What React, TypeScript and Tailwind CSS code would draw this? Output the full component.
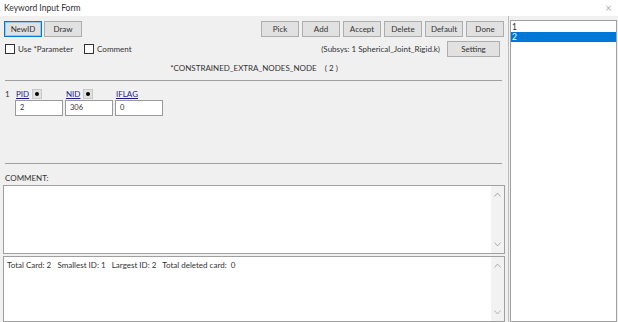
import React from 'react'

const buttons = ['Pick', 'Add', 'Accept', 'Delete', 'Default', 'Done']

function Btn({ label, focused = false, className = '' }: { label: string; focused?: boolean; className?: string }) {
  return (
    <div
      className={`h-[16px] flex items-center justify-center bg-[#e1e1e1] border text-[8px] text-[#333] ${
        focused ? 'border-[#0078d7] shadow-[inset_0_0_0_1px_#9cc5ea]' : 'border-[#adadad]'
      } ${className}`}
    >
      {label}
    </div>
  )
}

function Chevron({ up }: { up: boolean }) {
  return (
    <svg width="7" height="5" viewBox="0 0 7 5" className="block">
      <path d={up ? 'M0.5 4.5 L3.5 1 L6.5 4.5' : 'M0.5 0.5 L3.5 4 L6.5 0.5'} fill="none" stroke="#b0b0b0" strokeWidth="1" />
    </svg>
  )
}

function ScrollBox({ children, className = '' }: { children?: React.ReactNode; className?: string }) {
  return (
    <div className={`mx-[3px] flex bg-white border border-[#a0a0a0] ${className}`}>
      <div className="flex-1 px-[3px] pt-[2px]">{children}</div>
      <div className="w-[13px] bg-[#f2f2f2] flex flex-col items-center justify-between py-[6px]">
        <Chevron up />
        <Chevron up={false} />
      </div>
    </div>
  )
}

function DotBtn() {
  return (
    <div className="w-[10px] h-[10px] bg-[#e1e1e1] border border-[#c8c8c8] flex items-center justify-center">
      <div className="w-[4px] h-[4px] rounded-full bg-black" />
    </div>
  )
}

function Field({ label, value, dot }: { label: string; value: string; dot: boolean }) {
  return (
    <div className="flex flex-col w-[48px]">
      <div className="h-[11px] flex items-center gap-[3px] pl-[1px]">
        <span className="text-[8px] text-[#1a1a8c] underline leading-none">{label}</span>
        {dot && <DotBtn />}
      </div>
      <div className="mt-[1px] h-[16px] bg-white border border-[#9a9a9a] flex items-center px-[4px] text-[7.5px] text-[#333]">
        {value}
      </div>
    </div>
  )
}

function Check({ label }: { label: string }) {
  return (
    <div className="flex items-center gap-[3px]">
      <div className="w-[10px] h-[10px] bg-white border border-[#333]" />
      <span>{label}</span>
    </div>
  )
}

export default function App() {
  return (
    <div className="w-[618px] h-[322px] bg-white flex flex-col overflow-hidden font-['Lato',sans-serif] text-[8px] text-[#333]">
      <div className="h-[16px] flex items-center justify-between pl-[4px] pr-[6px] text-[8.5px]">
        <span>Keyword Input Form</span>
        <span className="text-[#b5b5b5] text-[12px]">×</span>
      </div>
      <div className="flex flex-1 min-h-0">
        <div className="w-[509px] bg-[#f0f0f0] border-r border-[#bdbdbd] flex flex-col">
          <div className="mt-[5px] flex items-center pl-[4px] pr-[4px]">
            <Btn label="NewID" focused className="w-[38px]" />
            <Btn label="Draw" className="w-[38px] ml-[2px]" />
            <div className="flex-1" />
            {buttons.map((b) => (
              <Btn key={b} label={b} className="w-[38px] ml-[3px]" />
            ))}
          </div>
          <div className="mt-[4px] h-[16px] flex items-center pl-[5px] pr-[8px]">
            <Check label="Use *Parameter" />
            <div className="ml-[11px]">
              <Check label="Comment" />
            </div>
            <div className="flex-1" />
            <span className="mr-[7px]">(Subsys: 1 Spherical_Joint_Rigid.k)</span>
            <Btn label="Setting" className="w-[53px]" />
          </div>
          <div className="h-[22px] flex items-center justify-center">*CONSTRAINED_EXTRA_NODES_NODE&nbsp;&nbsp;&nbsp;&nbsp;(&nbsp;2&nbsp;)</div>
          <div className="mt-[1px] ml-[5px] mr-[6px] h-px bg-[#a0a0a0]" />
          <div className="mt-[7px] flex pl-[5px]">
            <span className="w-[10px] h-[11px] flex items-center">1</span>
            <div className="flex gap-[2px]">
              <Field label="PID" value="2" dot />
              <Field label="NID" value="306" dot />
              <Field label="IFLAG" value="0" dot={false} />
            </div>
          </div>
          <div className="mt-[47px] ml-[5px] mr-[6px] h-px bg-[#a0a0a0]" />
          <div className="h-[20px] pl-[5px] flex items-end">COMMENT:</div>
          <ScrollBox className="mt-[1px] h-[69px]" />
          <ScrollBox className="mt-[2px] flex-1">
            <span>Total Card: 2&nbsp;&nbsp;&nbsp;Smallest ID: 1&nbsp;&nbsp;&nbsp;Largest ID: 2&nbsp;&nbsp;&nbsp;Total deleted card:&nbsp;&nbsp;0</span>
          </ScrollBox>
        </div>
        <div className="flex-1 bg-[#f0f0f0] pt-[4px] pl-[1px] pr-[1px]">
          <div className="h-full bg-white border border-[#a0a0a0] pt-[1px] text-[8.5px] leading-[10px]">
            <div className="h-[10px] pl-[1px]">1</div>
            <div className="h-[10px] pl-[1px] bg-[#0078d7] text-white">2</div>
          </div>
        </div>
      </div>
    </div>
  )
}
